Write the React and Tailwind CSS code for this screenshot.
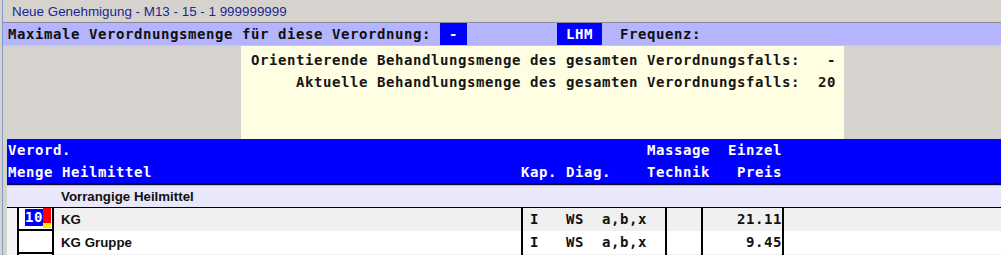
import React from "react";

const mono = "font-['DejaVu_Sans_Mono',monospace] font-bold text-[14px] tracking-[0.57px] whitespace-pre";

const pad = (s, n) => s.padEnd(n, " ");

const head1 = pad("Verord.", 71) + "Massage  Einzel";
const head2 = pad(pad("Menge Heilmittel", 57) + "Kap. Diag.", 71) + "Technik   Preis";

function Row({ label, bg, selected, kap, price }) {
  return (
    <div className={`shrink-0 flex h-[23px] ${bg}`}>
      <div className="w-[10px] bg-[#f4f4f4]" />
      <div className="w-[35px] border-l-2 border-b-2 border-black bg-white flex items-start">
        {selected ? (
          <>
            <div className={`ml-[6px] mt-[1px] h-[17px] w-[18px] bg-[#0000ff] text-white flex items-center ${mono}`}>10</div>
            <div className="flex flex-col">
              <div className="w-[8px] h-[15px] bg-[#ff0000]" />
              <div className="w-[8px] h-[5px] bg-[#ffe800]" />
            </div>
          </>
        ) : null}
      </div>
      <div className="w-[469px] border-l-2 border-black pl-[7px] flex items-center font-['Liberation_Sans',Arial,sans-serif] font-bold text-[13.3px] text-[#111]">
        {label}
      </div>
      <div className={`w-[144px] border-l-2 border-black pl-[7px] flex items-center text-[#111] ${mono}`}>
        {kap}
      </div>
      <div className="w-[36px] border-l-2 border-black" />
      <div className={`w-[81px] border-l-2 border-black flex items-center justify-end text-[#111] ${mono}`}>
        {price}
      </div>
      <div className="flex-1 border-l-2 border-black" />
    </div>
  );
}

export default function App() {
  return (
    <div className="w-[1001px] h-[255px] overflow-hidden bg-[#d6d3ce] flex">
      <div className="w-[2px] shrink-0 bg-[#d6d3ce]" />
      <div className="w-[1px] shrink-0 bg-[#7f9cc6]" />
      <div className="flex-1 flex flex-col">
        {/* title */}
        <div className="shrink-0 h-[22px] pl-[9px] pt-[3px] flex items-center font-['Liberation_Sans',Arial,sans-serif] text-[13.4px] text-[#1a2696]">
          Neue Genehmigung - M13 - 15 - 1 999999999
        </div>
        <div className="shrink-0 h-[1px] bg-[#8a8a98]" />
        {/* lavender bar */}
        <div className={`shrink-0 h-[22px] bg-[#b4b4ff] pl-[5px] flex items-stretch text-[#101010] ${mono}`}>
          <span className="flex items-center">{"Maximale Verordnungsmenge für diese Verordnung:"}</span>
          <span className="w-[9px]" />
          <span className="flex items-center bg-[#0000ff] text-white">{" - "}</span>
          <span className="w-[90px]" />
          <span className="flex items-center bg-[#0000ff] text-white">{" LHM "}</span>
          <span className="w-[18px]" />
          <span className="flex items-center">{"Frequenz:"}</span>
        </div>
        <div className="shrink-0 h-[1px] bg-[#c4c4ee]" />
        {/* middle */}
        <div className="shrink-0 h-[93px] flex">
          <div className="ml-[238px] w-[603px] bg-[#fffee2] pt-[3px] pr-[8px] flex flex-col items-end leading-[22px] text-[#151515]">
            <div className={mono}>{"Orientierende Behandlungsmenge des gesamten Verordnungsfalls:   -"}</div>
            <div className={mono}>{"Aktuelle Behandlungsmenge des gesamten Verordnungsfalls:  20"}</div>
          </div>
        </div>
        {/* table */}
        <div className="shrink-0 ml-[4px] flex flex-col">
          <div className="shrink-0 h-[44px] bg-[#0000ff] text-white pl-[1px] flex flex-col">
            <div className={`h-[22px] flex items-center ${mono}`}>{head1}</div>
            <div className={`h-[22px] flex items-center ${mono}`}>{head2}</div>
          </div>
          <div className="shrink-0 h-[2px] bg-[#0a0a40]" />
          <div className="shrink-0 h-[1px] bg-[#b8b8e0]" />
          <div className="shrink-0 h-[21px] bg-[#e8e8fa] pl-[54px] flex items-center font-['Liberation_Sans',Arial,sans-serif] font-bold text-[13.3px] text-[#111]">
            Vorrangige Heilmittel
          </div>
          <div className="shrink-0 h-[1px] bg-black" />
          <Row label="KG" bg="bg-[#f0f0f0]" selected kap={"I   WS  a,b,x"} price="21.11" />
          <Row label="KG Gruppe" bg="bg-white" kap={"I   WS  a,b,x"} price="9.45" />
          <Row label="" bg="bg-[#f0f0f0]" kap="" price="" />
        </div>
      </div>
    </div>
  );
}
